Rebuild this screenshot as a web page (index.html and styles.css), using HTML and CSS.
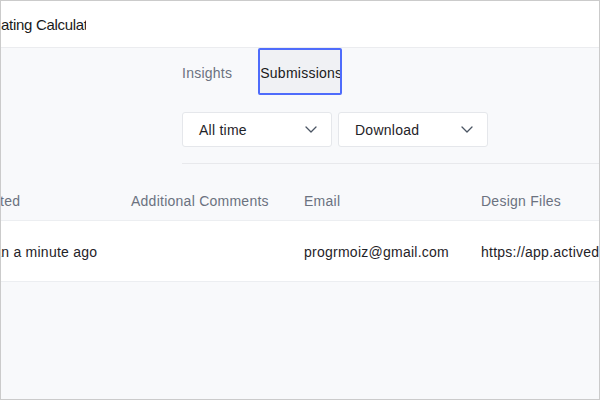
FILE: index.html
```html
<!DOCTYPE html>
<html lang="en">
<head>
  <meta charset="UTF-8">
  <meta name="viewport" content="width=device-width, initial-scale=1.0">
  <title>Submissions</title>
  <link rel="stylesheet" href="styles.css">
</head>
<body>
  <div class="window">
    <header class="topbar">
      <div class="title">ating Calculator</div>
    </header>

    <div class="toolbar">
      <nav class="tabs">
        <div class="tab">Insights</div>
        <div class="tab active">Submissions</div>
      </nav>
      <div class="filters">
        <div class="select">
          <span>All time</span>
          <svg class="chevron" width="12" height="7" viewBox="0 0 12 7"><path d="M1 1l5 5 5-5" fill="none" stroke="#4b5563" stroke-width="1.3" stroke-linecap="round" stroke-linejoin="round"/></svg>
        </div>
        <div class="select">
          <span>Download</span>
          <svg class="chevron" width="12" height="7" viewBox="0 0 12 7"><path d="M1 1l5 5 5-5" fill="none" stroke="#4b5563" stroke-width="1.3" stroke-linecap="round" stroke-linejoin="round"/></svg>
        </div>
      </div>
      <div class="divider"></div>
    </div>

    <div class="table-wrap">
      <table class="subs">
        <thead>
          <tr>
            <th class="c1">Submitted</th>
            <th class="c2">Additional Comments</th>
            <th class="c3">Email</th>
            <th class="c4">Design Files</th>
          </tr>
        </thead>
        <tbody>
          <tr>
            <td class="first">less than a minute ago</td>
            <td></td>
            <td>progrmoiz@gmail.com</td>
            <td>https://app.activedesign.io/files/upload</td>
          </tr>
        </tbody>
      </table>
    </div>
  </div>
</body>
</html>
```

FILE: styles.css
```css
* {
  box-sizing: border-box;
}
body {
  margin: 0;
  font-family: "Liberation Sans", Arial, sans-serif;
  font-size: 14px;
  letter-spacing: 0.25px;
  color: #1f2328;
}
.window {
  width: 600px;
  height: 400px;
  border: 1px solid #cbcbcb;
  background: #f8f9fb;
  overflow: hidden;
}
.topbar {
  height: 47px;
  background: #fff;
  border-bottom: 1px solid #ebecef;
  display: flex;
  align-items: center;
}
.title {
  width: 85px;
  overflow: hidden;
  white-space: nowrap;
  font-size: 15px;
  letter-spacing: -0.3px;
  color: #1a1a1a;
}
.toolbar {
  padding-left: 181px;
}
.tabs {
  display: flex;
  gap: 26px;
  height: 47px;
}
.tab {
  display: flex;
  align-items: center;
  padding-top: 2px;
  color: #6b7280;
  white-space: nowrap;
}
.tab.active {
  width: 84px;
  overflow: hidden;
  color: #1a1a1a;
  background: #f0f1f4;
  border: 2px solid #4f6cfb;
  border-radius: 2px;
  padding-left: 0;
}
.filters {
  display: flex;
  gap: 6px;
  margin-top: 17px;
}
.select {
  width: 150px;
  height: 35px;
  background: #fff;
  border: 1px solid #e5e7eb;
  border-radius: 3px;
  display: flex;
  align-items: center;
  justify-content: space-between;
  padding: 0 14px 0 16px;
  color: #1f2328;
}
.divider {
  margin-top: 16px;
  height: 1px;
  background: #e8e9ec;
}
.table-wrap {
  overflow: hidden;
}
.subs {
  border-collapse: collapse;
  table-layout: fixed;
  width: 900px;
  margin-left: -64px;
}
.subs th {
  text-align: left;
  font-weight: 400;
  color: #6b7280;
  padding: 29px 16px 11px;
  line-height: 16px;
  border-bottom: 1px solid #eceef1;
  white-space: nowrap;
}
.subs td {
  background: #fff;
  padding: 23px 16px 21px;
  line-height: 16px;
  border-bottom: 1px solid #eceef1;
  white-space: nowrap;
  overflow: hidden;
}
.subs th.c1 {
  padding-left: 18px;
}
.subs td.first {
  padding-left: 14px;
}
.c1 { width: 178px; }
.c2 { width: 173px; }
.c3 { width: 177px; }
.c4 { width: 372px; }
```
